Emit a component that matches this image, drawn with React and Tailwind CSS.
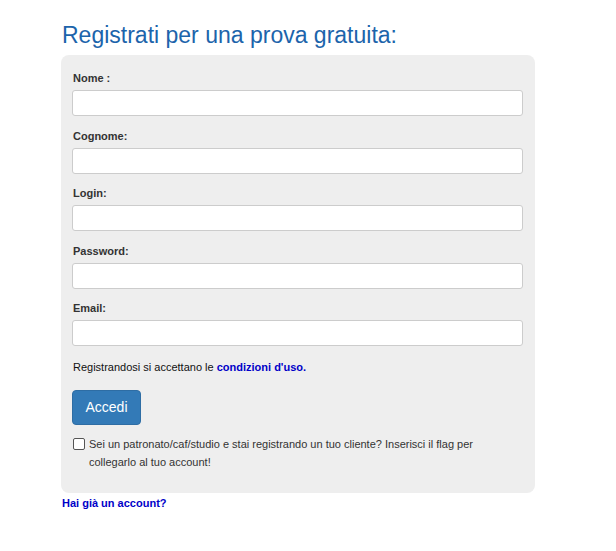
import React from 'react';

const fields = ['Nome :', 'Cognome:', 'Login:', 'Password:', 'Email:'];

const App = () => {
  return (
    <div className="bg-white min-h-[551px] w-[616px] pl-[61px] pt-[18px] font-['Liberation_Sans',Arial,sans-serif]">
      <h2 className="text-[23px] leading-[34px] text-[#1c64ab] ml-px">Registrati per una prova gratuita:</h2>
      <div className="mt-[3px] w-[474px] h-[438px] bg-[#eeeeee] rounded-[8px] px-[11px] pt-[16px]">
        {fields.map((f) => (
          <div key={f} className="mb-[12.5px]">
            <label className="block text-[11px] leading-[14px] font-bold text-[#333] ml-px">{f}</label>
            <input
              type="text"
              className="mt-[5px] block w-[451px] h-[26px] bg-white border border-[#cccccc] rounded-[3px]"
            />
          </div>
        ))}
        <p className="text-[11px] leading-[16px] text-[#111] mt-[8px] ml-px">
          Registrandosi si accettano le{' '}
          <a className="font-bold text-[#0000c8]">condizioni d'uso.</a>
        </p>
        <button className="mt-[15px] w-[69px] h-[35px] bg-[#337ab7] border border-[#2e6da4] rounded-[4px] text-white text-[14px] leading-[20px]">
          Accedi
        </button>
        <div className="flex items-start mt-[10px]">
          <span className="block w-[12px] h-[12px] border border-[#555] bg-white rounded-[2px] mt-[3px] ml-px shrink-0"></span>
          <p className="ml-[4px] text-[11px] leading-[18px] text-[#333] w-[420px]">
            Sei un patronato/caf/studio e stai registrando un tuo cliente? Inserisci il flag per collegarlo al tuo account!
          </p>
        </div>
      </div>
      <a className="block mt-[2px] text-[11px] leading-[16px] font-bold text-[#0000c8] ml-px">Hai già un account?</a>
    </div>
  );
};

export default App;
